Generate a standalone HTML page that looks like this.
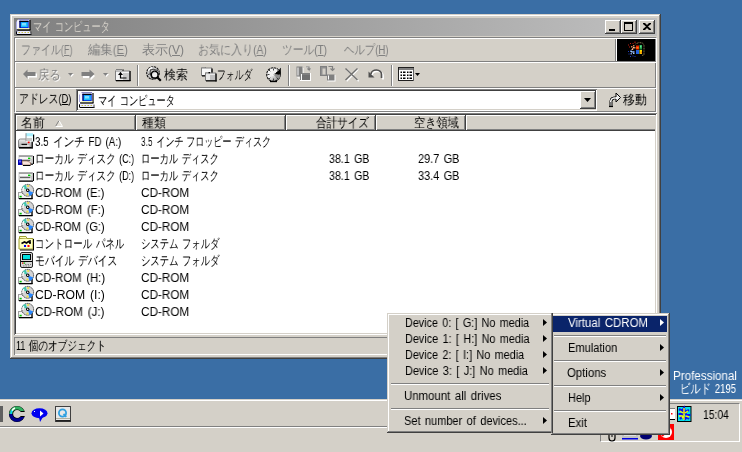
<!DOCTYPE html>
<html><head><meta charset="utf-8">
<style>
*{margin:0;padding:0;box-sizing:border-box}
html,body{width:742px;height:452px;overflow:hidden;background:#3a6ea5;font-family:"Liberation Sans",sans-serif;font-size:12px;color:#000}
.a{position:absolute}
.t{will-change:transform;position:absolute;white-space:nowrap;line-height:14px;font-size:12px;transform-origin:0 0;word-spacing:1.5px}
.j{font-size:12.5px;line-height:0}
.btn{position:absolute;background:#d4d0c8;box-shadow:inset -1px -1px #404040,inset 1px 1px #fff,inset -2px -2px #808080,inset 2px 2px #d4d0c8}
.hdr{position:absolute;top:115px;height:16px;background:#d4d0c8;box-shadow:inset -1px -1px #404040,inset 1px 1px #fff,inset -2px -2px #808080}
.sep{position:absolute;height:2px;border-top:1px solid #808080;border-bottom:1px solid #fff}
.vsep{position:absolute;width:2px;border-left:1px solid #808080;border-right:1px solid #fff}
.pop{position:absolute;background:#d4d0c8;box-shadow:inset -1px -1px #404040,inset 1px 1px #d4d0c8,inset -2px -2px #808080,inset 2px 2px #fff}
svg{position:absolute;overflow:visible}
</style></head><body>
<!-- window frame -->
<div class="a" style="left:10px;top:14px;width:651px;height:345px;background:#d4d0c8;box-shadow:inset -1px -1px #404040,inset 1px 1px #d4d0c8,inset -2px -2px #808080,inset 2px 2px #fff"></div>
<div class="a" style="left:14px;top:18px;width:643px;height:18px;background:linear-gradient(to right,#808080,#c0c0c0)"></div>
<div class="btn" style="left:605px;top:20px;width:16px;height:14px"></div>
<div class="a" style="left:609px;top:29px;width:6px;height:2px;background:#000"></div>
<div class="btn" style="left:621px;top:20px;width:16px;height:14px"></div>
<div class="a" style="left:624px;top:22px;width:9px;height:9px;border:1px solid #000;border-top-width:2px"></div>
<div class="btn" style="left:639px;top:20px;width:16px;height:14px"></div>
<svg style="left:643px;top:23px" width="8" height="7"><path d="M0 0h2l2 2l2-2h2v1l-3 2.5l3 2.5v1h-2l-2-2l-2 2h-2v-1l3-2.5l-3-2.5z" fill="#000"/></svg>

<!-- rebar -->
<div class="a" style="left:14px;top:37px;width:643px;height:76px;border-top:1px solid #808080;border-left:1px solid #808080;border-right:1px solid #fff;border-bottom:1px solid #fff;box-shadow:inset 1px 1px #fff,inset -1px -1px #808080"></div>
<div class="sep" style="left:15px;top:61px;width:641px"></div>
<div class="sep" style="left:15px;top:87px;width:641px"></div>
<div class="vsep" style="left:615px;top:39px;height:22px"></div>
<div class="a" style="left:617px;top:39px;width:38px;height:22px;background:#000"></div>
<div class="vsep" style="left:137px;top:65px;height:21px"></div>
<div class="vsep" style="left:288px;top:65px;height:21px"></div>
<div class="vsep" style="left:391px;top:65px;height:21px"></div>

<!-- address combo -->
<div class="a" style="left:76px;top:89px;width:521px;height:22px;background:#fff;box-shadow:inset 1px 1px #808080,inset -1px -1px #fff,inset 2px 2px #404040,inset -2px -2px #d4d0c8"></div>
<div class="btn" style="left:580px;top:91px;width:16px;height:18px"></div>
<svg style="left:584px;top:98px" width="7" height="4"><path d="M0 0h7L3.5 4z" fill="#000"/></svg>

<!-- list view -->
<div class="a" style="left:14px;top:113px;width:643px;height:222px;background:#fff;box-shadow:inset 1px 1px #808080,inset -1px -1px #fff,inset 2px 2px #404040,inset -2px -2px #d4d0c8"></div>
<div class="hdr" style="left:16px;width:120px"></div>
<div class="hdr" style="left:136px;width:150px"></div>
<div class="hdr" style="left:286px;width:90px"></div>
<div class="hdr" style="left:376px;width:90px"></div>
<div class="hdr" style="left:466px;width:189px;box-shadow:inset 0 -1px #404040,inset 1px 1px #fff,inset 0 -2px #808080"></div>
<svg style="left:55px;top:120px" width="8" height="7"><path d="M0.5 6.5L4 0.5L7.5 6.5z" fill="#e4e0d8"/><path d="M0.5 6.5L4 0.5" stroke="#808080" stroke-width="1"/><path d="M4 0.5L7.5 6.5H0.5" fill="none" stroke="#fff" stroke-width="1"/></svg>

<!-- status bar -->
<div class="a" style="left:14px;top:337px;width:643px;height:18px;box-shadow:inset 1px 1px #808080,inset -1px -1px #fff"></div>

<!-- taskbar -->
<div class="a" style="left:0;top:399px;width:742px;height:53px;background:#d4d0c8;border-top:1px solid #d4d0c8;box-shadow:inset 0 1px #fff"></div>
<div class="sep" style="left:0;top:426px;width:600px"></div>
<div class="a" style="left:600px;top:403px;width:140px;height:39px;border-top:1px solid #808080;border-left:1px solid #808080;border-right:1px solid #fff;border-bottom:1px solid #fff;background:#d4d0c8"></div>
<svg style="left:16px;top:19px;" width="16" height="16" viewBox="0 0 16 16">
<path d="M1 2Q1 0.5 2.5 0.5H13.5V10.5H1z" fill="#f4f4ff"/>
<path d="M0.5 2.5v7.5" stroke="#a8a8e0"/>
<path d="M2.5 0.5H13" stroke="#8888c0"/>
<path d="M14 1v10" stroke="#000" stroke-width="1.2"/>
<rect x="3.5" y="1.8" width="9.2" height="7.4" fill="#0020e0"/>
<rect x="3.5" y="1.8" width="9" height="1.2" fill="#000"/>
<rect x="3.5" y="1.8" width="1" height="7" fill="#000040"/>
<rect x="4.8" y="3.2" width="7" height="5" fill="#18c0ff"/>
<rect x="6" y="4" width="4" height="2.5" fill="#80e0ff"/>
<path d="M2 9.8h11.5" stroke="#ffffa0" stroke-width="1"/>
<path d="M1 11h13.5" stroke="#000" stroke-width="1.3"/>
<path d="M1.5 12L13.5 12L15.5 15.5L0.5 15.5z" fill="#e8e8ff"/>
<path d="M0.5 12v3.5M1 15.5h14.5" stroke="#000" stroke-width="1"/>
<path d="M15 12.5v3" stroke="#404040" stroke-width="1"/>
<path d="M2.5 13.5h1.5M5.5 13.5h1.5M8.5 13.5h1.5M11.5 13.5h1.5" stroke="#c8c040"/>
<path d="M0.5 12.5l1-1" stroke="#8080c0"/>
</svg>
<svg style="left:79px;top:92px;" width="16" height="16" viewBox="0 0 16 16">
<path d="M1 2Q1 0.5 2.5 0.5H13.5V10.5H1z" fill="#f4f4ff"/>
<path d="M0.5 2.5v7.5" stroke="#a8a8e0"/>
<path d="M2.5 0.5H13" stroke="#8888c0"/>
<path d="M14 1v10" stroke="#000" stroke-width="1.2"/>
<rect x="3.5" y="1.8" width="9.2" height="7.4" fill="#0020e0"/>
<rect x="3.5" y="1.8" width="9" height="1.2" fill="#000"/>
<rect x="3.5" y="1.8" width="1" height="7" fill="#000040"/>
<rect x="4.8" y="3.2" width="7" height="5" fill="#18c0ff"/>
<rect x="6" y="4" width="4" height="2.5" fill="#80e0ff"/>
<path d="M2 9.8h11.5" stroke="#ffffa0" stroke-width="1"/>
<path d="M1 11h13.5" stroke="#000" stroke-width="1.3"/>
<path d="M1.5 12L13.5 12L15.5 15.5L0.5 15.5z" fill="#e8e8ff"/>
<path d="M0.5 12v3.5M1 15.5h14.5" stroke="#000" stroke-width="1"/>
<path d="M15 12.5v3" stroke="#404040" stroke-width="1"/>
<path d="M2.5 13.5h1.5M5.5 13.5h1.5M8.5 13.5h1.5M11.5 13.5h1.5" stroke="#c8c040"/>
<path d="M0.5 12.5l1-1" stroke="#8080c0"/>
</svg>
<svg style="left:627px;top:41px;" width="20" height="17" viewBox="0 0 20 17">
<g fill="#d08050"><rect x="4" y="5" width="1.5" height="1.5"/><rect x="6" y="4" width="1.5" height="1.5"/><rect x="5" y="7" width="1.5" height="1.5"/><rect x="7" y="6" width="1.5" height="1.5"/></g>
<g fill="#f0b8a0"><rect x="6" y="6" width="1.2" height="1.2"/><rect x="4.5" y="8" width="1.5" height="1"/></g>
<g fill="#7088d0"><rect x="3" y="9.5" width="2" height="1.5"/><rect x="5.5" y="10" width="2" height="2"/><rect x="3.5" y="12" width="1.5" height="1.5"/></g>
<g fill="#a0d0f0"><rect x="4" y="10" width="1.5" height="1.5"/><rect x="6" y="12" width="1.5" height="1"/></g>
<rect x="9" y="4.5" width="3" height="4" fill="#f02000"/>
<rect x="9.5" y="6" width="2" height="1.5" fill="#ff8000"/>
<rect x="12.5" y="4" width="2.5" height="4.5" fill="#20a040"/>
<rect x="13" y="4.5" width="1.5" height="2" fill="#60e0a0"/>
<rect x="9" y="9" width="3" height="4" fill="#2060e0"/>
<rect x="12.5" y="9" width="2.5" height="4" fill="#f0e000"/>
<rect x="13.5" y="10.5" width="1.5" height="2" fill="#ff8000"/>
<path d="M8.5 3l3.5-1.5l3.5 0.5l1.5 2v10l-2.5 0.5" fill="none" stroke="#908050" stroke-width="0.9" stroke-dasharray="1 0.6"/>
<g fill="#c02010"><rect x="1" y="3.5" width="1" height="1"/><rect x="3" y="2" width="1" height="1"/><rect x="5.5" y="2" width="1" height="1"/><rect x="7.5" y="0.5" width="1" height="1.5"/><rect x="2" y="5.5" width="1" height="1"/></g>
<g fill="#2040c0"><rect x="1" y="10" width="1" height="1"/><rect x="1.5" y="12.5" width="1" height="1"/><rect x="3" y="15" width="1" height="1"/><rect x="5.5" y="14.5" width="1" height="1"/><rect x="7.5" y="15" width="1" height="1"/></g>
</svg>
<svg style="left:22px;top:69px;" width="16" height="12" viewBox="0 0 16 12">
<path d="M6 1.5L2 5.5L6 9.5V7.5H14V3.5H6z" fill="#fff" transform="translate(1,1)"/>
<path d="M5.5 0.5L1 5L5.5 9.5V7H13.5V3H5.5z" fill="#808080"/>
</svg>
<svg style="left:68px;top:73px;" width="6" height="4" viewBox="0 0 6 4"><path d="M1 1h5l-2.5 3z" fill="#fff"/><path d="M0 0h5l-2.5 3z" fill="#808080"/></svg>
<svg style="left:81px;top:69px;" width="16" height="12" viewBox="0 0 16 12">
<path d="M8.5 1.5L13 6L8.5 10.5V8H1V4H8.5z" fill="#fff" transform="translate(1,1)"/>
<path d="M8.5 0.5L13.5 5L8.5 9.5V7H0.5V3H8.5z" fill="#808080"/>
</svg>
<svg style="left:103px;top:73px;" width="6" height="4" viewBox="0 0 6 4"><path d="M1 1h5l-2.5 3z" fill="#fff"/><path d="M0 0h5l-2.5 3z" fill="#808080"/></svg>
<svg style="left:115px;top:68px;" width="16" height="14" viewBox="0 0 16 14">
<path d="M1 1.5h6l1 1.5" fill="none" stroke="#808080" stroke-width="1"/>
<rect x="1" y="2" width="6" height="1" fill="#fff"/>
<rect x="7.5" y="1.5" width="1.2" height="1.5" fill="#000"/>
<rect x="0.5" y="3" width="14" height="9.5" fill="#f4f4f4" stroke="#808080" stroke-width="1"/>
<rect x="8" y="5" width="6" height="7" fill="#c8c8c8"/>
<rect x="1" y="12" width="14.5" height="1.3" fill="#000"/>
<rect x="14.5" y="3" width="1.2" height="10" fill="#000"/>
<path d="M5.5 4.5v5.5h6" fill="none" stroke="#000" stroke-width="1.2"/>
<path d="M3 7l2.5-3l2.5 3z" fill="#000"/>
</svg>
<svg style="left:146px;top:66px;" width="16" height="16" viewBox="0 0 16 16">
<circle cx="7" cy="7" r="6.3" fill="#c8c8c8" stroke="#101010" stroke-width="1.1" stroke-dasharray="2.2 0.8"/>
<path d="M2.5 4.5Q7 2 12 4.5M2 8.5Q5 7 8 8M4.5 1.5Q3 7 6 12.5" stroke="#303030" stroke-width="0.9" fill="none"/>
<path d="M2.5 5a5 5 0 0 1 4-3.5" stroke="#fff" stroke-width="1.4" fill="none"/>
<circle cx="8.7" cy="8.7" r="3.4" fill="#f0f0f0" stroke="#000" stroke-width="1.5"/>
<path d="M7 7.5a2 2 0 0 1 2-1.5" stroke="#b0b0b0" stroke-width="0.9" fill="none"/>
<path d="M11.2 11.2l3.6 3.6" stroke="#000" stroke-width="2.2"/>
</svg>
<svg style="left:201px;top:66px;" width="16" height="16" viewBox="0 0 16 16">
<path d="M0.5 2h3.5l1-1" fill="none" stroke="#808080"/>
<rect x="0.5" y="2" width="10" height="7.5" fill="#f8f8f8" stroke="#808080" stroke-width="1"/>
<rect x="1" y="9.3" width="10.5" height="1.2" fill="#000"/>
<rect x="10.5" y="2.5" width="1.2" height="8" fill="#000"/>
<path d="M4.5 7h4l1-1" fill="none" stroke="#808080"/>
<rect x="4.5" y="7" width="10" height="7.5" fill="#e8e8e8" stroke="#808080" stroke-width="1"/>
<rect x="9" y="9" width="5" height="5" fill="#c0c0c0"/>
<rect x="5" y="14.3" width="10.5" height="1.2" fill="#000"/>
<rect x="14.5" y="7.5" width="1.2" height="8" fill="#000"/>
<rect x="7.5" y="6" width="1.5" height="1.3" fill="#000"/>
</svg>
<svg style="left:266px;top:67px;" width="16" height="16" viewBox="0 0 16 16">
<defs><linearGradient id="hg" x1="0" y1="0" x2="1" y2="1"><stop offset="0" stop-color="#ffffff"/><stop offset="0.45" stop-color="#f0f0f0"/><stop offset="1" stop-color="#707070"/></linearGradient></defs>
<circle cx="7.5" cy="7.5" r="6.8" fill="url(#hg)" stroke="#101010" stroke-width="1.1" stroke-dasharray="2.5 0.7"/>
<path d="M7.5 7.5L14.8 0.2V7.5z" fill="#000"/>
<path d="M7.5 7.5H14.3A6.8 6.8 0 0 1 12 12.5z" fill="#909090"/>
<path d="M6.5 8.5L14.5 0.5" stroke="#fff" stroke-width="1.3" stroke-dasharray="1 0.8"/>
<path d="M7.5 1.5v2M7.5 11.5v2M1.5 7.5h2M11.5 7.5h2M3 3l1.3 1.3M3 12l1.3-1.3M12 12l-1.3-1.3" stroke="#303030" stroke-width="0.9"/>
<path d="M4 14.5h7" stroke="#000" stroke-width="1.3"/>
</svg>
<svg style="left:296px;top:66px;" width="16" height="16" viewBox="0 0 16 16">
<path d="M1 1h5v10h-5z" fill="none" stroke="#fff" transform="translate(1,1)"/>
<rect x="0.5" y="0.5" width="6" height="10" fill="#808080"/>
<rect x="1.5" y="1.5" width="1" height="8" fill="#fff"/>
<path d="M10 1.5h3v3l1.5-1.5" fill="none" stroke="#fff"/>
<path d="M10 1h3v3l-1.5-1.5M13 4l1.5-1.5" fill="none" stroke="#808080" stroke-width="1.2"/>
<rect x="4" y="7" width="11" height="8" fill="#fff"/>
<rect x="4" y="7" width="10" height="7" fill="#808080"/>
<rect x="5" y="8" width="1" height="6" fill="#fff"/>
<rect x="6" y="9" width="8" height="5" fill="#707070"/>
</svg>
<svg style="left:320px;top:66px;" width="16" height="16" viewBox="0 0 16 16">
<rect x="0" y="0" width="7" height="10" fill="#808080"/>
<rect x="1" y="1" width="5" height="8" fill="#909090"/>
<rect x="2.5" y="2.5" width="3" height="6" fill="#d4d0c8"/>
<path d="M8.5 0.5h4v3" fill="none" stroke="#808080" stroke-width="1.2"/>
<path d="M10.5 2.5l2 2l2-2" fill="none" stroke="#808080" stroke-width="1.2"/>
<rect x="7.5" y="9" width="8" height="6.5" fill="#fff"/>
<rect x="7" y="8.5" width="7.5" height="6" fill="#808080"/>
<rect x="8" y="9.5" width="1" height="4" fill="#fff"/>
</svg>
<svg style="left:345px;top:68px;" width="14" height="13" viewBox="0 0 14 13">
<path d="M1 1L13 12.5M12.5 0.5L1 12.5" stroke="#fff" stroke-width="1.3" transform="translate(0.7,0.7)"/>
<path d="M0.5 0.5L12.5 12M12.5 0.5L0.5 12" stroke="#707070" stroke-width="1.4"/>
</svg>
<svg style="left:368px;top:70px;" width="16" height="10" viewBox="0 0 16 10">
<path d="M3 4.5A5 4 0 0 1 14 5V8.5" fill="none" stroke="#fff" stroke-width="1.8" transform="translate(1,1)"/>
<path d="M3 4A5 4 0 0 1 13.5 4.5V8" fill="none" stroke="#505050" stroke-width="1.6"/>
<path d="M0.5 1.5v6h6z" fill="#505050"/>
</svg>
<svg style="left:398px;top:67px;" width="16" height="14" viewBox="0 0 16 14">
<rect x="0.5" y="0.5" width="15" height="13" fill="#fff" stroke="#202020" stroke-width="1"/>
<rect x="1" y="1" width="14" height="2" fill="#808080"/>
<rect x="15" y="1" width="1" height="13" fill="#606060"/>
<g fill="#000">
<rect x="2.5" y="4.5" width="1.5" height="1.5"/><rect x="5" y="4.5" width="2.5" height="1.5"/>
<rect x="9" y="4.5" width="1.5" height="1.5"/><rect x="11.5" y="4.5" width="2.5" height="1.5"/>
<rect x="2.5" y="7.5" width="1.5" height="1.5"/><rect x="5" y="7.5" width="2.5" height="1.5"/>
<rect x="9" y="7.5" width="1.5" height="1.5"/><rect x="11.5" y="7.5" width="2.5" height="1.5"/>
<rect x="2.5" y="10.5" width="1.5" height="1.5"/><rect x="5" y="10.5" width="2.5" height="1.5"/>
<rect x="9" y="10.5" width="1.5" height="1.5"/><rect x="11.5" y="10.5" width="2.5" height="1.5"/>
</g>
</svg>
<svg style="left:415px;top:73px;" width="6" height="4" viewBox="0 0 6 4"><path d="M0 0h5l-2.5 3z" fill="#000"/></svg>
<svg style="left:606px;top:92px;" width="16" height="16" viewBox="0 0 16 16">
<path d="M4 14.5V9A4 4 0 0 1 8 5h2V1l4.5 4.5L10 10V7H8.5A2.5 2.5 0 0 0 6 9.5v5z" fill="#f0f0f0" stroke="#000" stroke-width="1"/>
<path d="M4.5 10A3.5 3.5 0 0 1 8 6h3" fill="none" stroke="#fff" stroke-width="1"/>
<path d="M3 14.5h4" stroke="#000" stroke-width="1.2"/>
</svg>
<svg style="left:18px;top:133px;" width="16" height="16" viewBox="0 0 16 16">
<defs><linearGradient id="fg" x1="0" y1="0" x2="0" y2="1"><stop offset="0" stop-color="#f0f0f0"/><stop offset="1" stop-color="#a0a0a0"/></linearGradient></defs>
<path d="M0.5 8Q0.5 6 2.5 6H14V14.5H0.5z" fill="url(#fg)" stroke="#707070" stroke-width="0.8"/>
<rect x="1" y="14" width="14" height="1.6" fill="#000"/>
<rect x="13.6" y="6.5" width="1.4" height="8.5" fill="#202020"/>
<rect x="3.5" y="10.8" width="5.5" height="1.5" fill="#101010"/>
<rect x="2.5" y="12.4" width="9" height="1" fill="#fff"/>
<rect x="8" y="0.2" width="7" height="8.5" fill="#f4ffff"/>
<rect x="8" y="0.2" width="7" height="3" fill="#a8f0ff"/>
<rect x="8.5" y="5" width="5.5" height="3" fill="#c8c8c8"/>
<rect x="15" y="1.5" width="1.2" height="7" fill="#000"/>
<rect x="7.5" y="0.2" width="1" height="8" fill="#909090"/>
<rect x="9.8" y="8.6" width="1.8" height="1.6" fill="#ff0000"/>
</svg>
<svg style="left:18px;top:150px;" width="16" height="16" viewBox="0 0 16 16">
<rect x="0.5" y="5" width="14.5" height="8.5" fill="#c8c8c8"/>
<rect x="1" y="5.5" width="13.5" height="1.2" fill="#909090"/>
<rect x="1.5" y="7" width="12" height="2" fill="#f8f8f8"/>
<rect x="2" y="10" width="10" height="1.2" fill="#606060"/>
<rect x="2" y="11.5" width="11" height="1.2" fill="#ffffff"/>
<rect x="15" y="6" width="1" height="8" fill="#000"/>
<rect x="1" y="13.5" width="14" height="1.3" fill="#000"/>
<rect x="10" y="7.6" width="2.4" height="1.4" fill="#00d000"/>

<rect x="0" y="9.5" width="4" height="5.5" fill="#0000b0"/>
<rect x="1" y="10.5" width="2" height="2" fill="#6060ff"/>
<path d="M4 11h5l3.5 1.5v2.5h-8z" fill="#f8e4dc" stroke="#805040" stroke-width="0.6"/>
<path d="M5 15.5h7.5" stroke="#000"/>
</svg>
<svg style="left:18px;top:167px;" width="16" height="16" viewBox="0 0 16 16">
<rect x="0.5" y="5" width="14.5" height="8.5" fill="#c8c8c8"/>
<rect x="1" y="5.5" width="13.5" height="1.2" fill="#909090"/>
<rect x="1.5" y="7" width="12" height="2" fill="#f8f8f8"/>
<rect x="2" y="10" width="10" height="1.2" fill="#606060"/>
<rect x="2" y="11.5" width="11" height="1.2" fill="#ffffff"/>
<rect x="15" y="6" width="1" height="8" fill="#000"/>
<rect x="1" y="13.5" width="14" height="1.3" fill="#000"/>
<rect x="10" y="7.6" width="2.4" height="1.4" fill="#00d000"/>
</svg>
<svg style="left:18px;top:184px;" width="16" height="16" viewBox="0 0 16 16">
<rect x="0.5" y="8.5" width="13" height="6" fill="#f4f4f4" stroke="#a0a0a0" stroke-width="1"/>
<rect x="1" y="14" width="13.5" height="1.3" fill="#000"/>
<rect x="13.5" y="9" width="1.2" height="6" fill="#000"/>
<circle cx="9.7" cy="6.3" r="5.9" fill="#d4d4d4" stroke="#202020" stroke-width="0.9" stroke-dasharray="1.3 0.7"/>
<path d="M9.7 6.3L4.2 3.5A6 6 0 0 1 7.5 0.7z" fill="#40c8b0"/>
<path d="M9.7 6.3L11.5 12A6 6 0 0 0 15.2 8.5z" fill="#2888ff"/>
<path d="M5 7A5 5 0 0 1 6 3" stroke="#fff" stroke-width="1.2" fill="none"/>
<circle cx="10.2" cy="2" r="1.1" fill="#e8e040"/>
<circle cx="9.4" cy="10.6" r="1.1" fill="#e8e040"/>
<circle cx="9.7" cy="6.3" r="1.7" fill="#000"/>
<circle cx="9.7" cy="6.3" r="0.8" fill="#fff"/>
<rect x="1.5" y="11.8" width="2.2" height="1.6" fill="#00c000"/>
</svg>
<svg style="left:18px;top:201px;" width="16" height="16" viewBox="0 0 16 16">
<rect x="0.5" y="8.5" width="13" height="6" fill="#f4f4f4" stroke="#a0a0a0" stroke-width="1"/>
<rect x="1" y="14" width="13.5" height="1.3" fill="#000"/>
<rect x="13.5" y="9" width="1.2" height="6" fill="#000"/>
<circle cx="9.7" cy="6.3" r="5.9" fill="#d4d4d4" stroke="#202020" stroke-width="0.9" stroke-dasharray="1.3 0.7"/>
<path d="M9.7 6.3L4.2 3.5A6 6 0 0 1 7.5 0.7z" fill="#40c8b0"/>
<path d="M9.7 6.3L11.5 12A6 6 0 0 0 15.2 8.5z" fill="#2888ff"/>
<path d="M5 7A5 5 0 0 1 6 3" stroke="#fff" stroke-width="1.2" fill="none"/>
<circle cx="10.2" cy="2" r="1.1" fill="#e8e040"/>
<circle cx="9.4" cy="10.6" r="1.1" fill="#e8e040"/>
<circle cx="9.7" cy="6.3" r="1.7" fill="#000"/>
<circle cx="9.7" cy="6.3" r="0.8" fill="#fff"/>
<rect x="1.5" y="11.8" width="2.2" height="1.6" fill="#00c000"/>
</svg>
<svg style="left:18px;top:218px;" width="16" height="16" viewBox="0 0 16 16">
<rect x="0.5" y="8.5" width="13" height="6" fill="#f4f4f4" stroke="#a0a0a0" stroke-width="1"/>
<rect x="1" y="14" width="13.5" height="1.3" fill="#000"/>
<rect x="13.5" y="9" width="1.2" height="6" fill="#000"/>
<circle cx="9.7" cy="6.3" r="5.9" fill="#d4d4d4" stroke="#202020" stroke-width="0.9" stroke-dasharray="1.3 0.7"/>
<path d="M9.7 6.3L4.2 3.5A6 6 0 0 1 7.5 0.7z" fill="#40c8b0"/>
<path d="M9.7 6.3L11.5 12A6 6 0 0 0 15.2 8.5z" fill="#2888ff"/>
<path d="M5 7A5 5 0 0 1 6 3" stroke="#fff" stroke-width="1.2" fill="none"/>
<circle cx="10.2" cy="2" r="1.1" fill="#e8e040"/>
<circle cx="9.4" cy="10.6" r="1.1" fill="#e8e040"/>
<circle cx="9.7" cy="6.3" r="1.7" fill="#000"/>
<circle cx="9.7" cy="6.3" r="0.8" fill="#fff"/>
<rect x="1.5" y="11.8" width="2.2" height="1.6" fill="#00c000"/>
</svg>
<svg style="left:18px;top:269px;" width="16" height="16" viewBox="0 0 16 16">
<rect x="0.5" y="8.5" width="13" height="6" fill="#f4f4f4" stroke="#a0a0a0" stroke-width="1"/>
<rect x="1" y="14" width="13.5" height="1.3" fill="#000"/>
<rect x="13.5" y="9" width="1.2" height="6" fill="#000"/>
<circle cx="9.7" cy="6.3" r="5.9" fill="#d4d4d4" stroke="#202020" stroke-width="0.9" stroke-dasharray="1.3 0.7"/>
<path d="M9.7 6.3L4.2 3.5A6 6 0 0 1 7.5 0.7z" fill="#40c8b0"/>
<path d="M9.7 6.3L11.5 12A6 6 0 0 0 15.2 8.5z" fill="#2888ff"/>
<path d="M5 7A5 5 0 0 1 6 3" stroke="#fff" stroke-width="1.2" fill="none"/>
<circle cx="10.2" cy="2" r="1.1" fill="#e8e040"/>
<circle cx="9.4" cy="10.6" r="1.1" fill="#e8e040"/>
<circle cx="9.7" cy="6.3" r="1.7" fill="#000"/>
<circle cx="9.7" cy="6.3" r="0.8" fill="#fff"/>
<rect x="1.5" y="11.8" width="2.2" height="1.6" fill="#00c000"/>
</svg>
<svg style="left:18px;top:286px;" width="16" height="16" viewBox="0 0 16 16">
<rect x="0.5" y="8.5" width="13" height="6" fill="#f4f4f4" stroke="#a0a0a0" stroke-width="1"/>
<rect x="1" y="14" width="13.5" height="1.3" fill="#000"/>
<rect x="13.5" y="9" width="1.2" height="6" fill="#000"/>
<circle cx="9.7" cy="6.3" r="5.9" fill="#d4d4d4" stroke="#202020" stroke-width="0.9" stroke-dasharray="1.3 0.7"/>
<path d="M9.7 6.3L4.2 3.5A6 6 0 0 1 7.5 0.7z" fill="#40c8b0"/>
<path d="M9.7 6.3L11.5 12A6 6 0 0 0 15.2 8.5z" fill="#2888ff"/>
<path d="M5 7A5 5 0 0 1 6 3" stroke="#fff" stroke-width="1.2" fill="none"/>
<circle cx="10.2" cy="2" r="1.1" fill="#e8e040"/>
<circle cx="9.4" cy="10.6" r="1.1" fill="#e8e040"/>
<circle cx="9.7" cy="6.3" r="1.7" fill="#000"/>
<circle cx="9.7" cy="6.3" r="0.8" fill="#fff"/>
<rect x="1.5" y="11.8" width="2.2" height="1.6" fill="#00c000"/>
</svg>
<svg style="left:18px;top:303px;" width="16" height="16" viewBox="0 0 16 16">
<rect x="0.5" y="8.5" width="13" height="6" fill="#f4f4f4" stroke="#a0a0a0" stroke-width="1"/>
<rect x="1" y="14" width="13.5" height="1.3" fill="#000"/>
<rect x="13.5" y="9" width="1.2" height="6" fill="#000"/>
<circle cx="9.7" cy="6.3" r="5.9" fill="#d4d4d4" stroke="#202020" stroke-width="0.9" stroke-dasharray="1.3 0.7"/>
<path d="M9.7 6.3L4.2 3.5A6 6 0 0 1 7.5 0.7z" fill="#40c8b0"/>
<path d="M9.7 6.3L11.5 12A6 6 0 0 0 15.2 8.5z" fill="#2888ff"/>
<path d="M5 7A5 5 0 0 1 6 3" stroke="#fff" stroke-width="1.2" fill="none"/>
<circle cx="10.2" cy="2" r="1.1" fill="#e8e040"/>
<circle cx="9.4" cy="10.6" r="1.1" fill="#e8e040"/>
<circle cx="9.7" cy="6.3" r="1.7" fill="#000"/>
<circle cx="9.7" cy="6.3" r="0.8" fill="#fff"/>
<rect x="1.5" y="11.8" width="2.2" height="1.6" fill="#00c000"/>
</svg>
<svg style="left:18px;top:235px;" width="16" height="16" viewBox="0 0 16 16">
<path d="M1 3.5h14v10.5h-14z" fill="#ffffc0" stroke="#a0a030" stroke-width="1"/>
<path d="M1.5 3V1.5h6.5l1 2" fill="#ffffc0" stroke="#a0a030" stroke-width="1"/>
<rect x="15" y="4" width="1" height="11" fill="#000"/>
<rect x="2" y="14.5" width="14" height="1" fill="#000"/>
<path d="M3.5 8.5l3-1.5l2 1l2-1.5l2 1.5" stroke="#000" stroke-width="1.6" fill="none"/>
<path d="M12 5v4" stroke="#000" stroke-width="1.5"/>
<rect x="6" y="10" width="2" height="2" fill="#0000ff"/>
<rect x="9.5" y="10" width="2" height="2" fill="#ff0000"/>
</svg>
<svg style="left:18px;top:252px;" width="16" height="16" viewBox="0 0 16 16">
<rect x="2.5" y="0.5" width="12" height="15" rx="1.5" fill="#d8d8d8" stroke="#202020" stroke-width="1"/>
<rect x="4" y="2" width="9" height="6" fill="#000"/>
<rect x="5" y="3" width="7" height="4.2" fill="#00e0e0"/>
<rect x="3" y="9" width="11" height="1" fill="#000"/>
<rect x="4" y="10.5" width="1.5" height="1.2" fill="#ff0000"/>
<rect x="5.6" y="10.5" width="1.5" height="1.2" fill="#00c000"/>
<path d="M7 12.5h1.5M9.5 12.5h1.5M12 12.5h1" stroke="#808080"/>
<path d="M5 14h1.5M7.5 14h1.5M10 14h1.5" stroke="#808080"/>
</svg>
<div class="a" style="left:0;top:406px;width:3px;height:16px;background:#606060"></div>
<svg style="left:9px;top:406px;" width="16" height="16" viewBox="0 0 16 16">
<circle cx="8" cy="8" r="6" fill="none" stroke="#000" stroke-width="4.2"/>
<path d="M8 8m-6.2 0a6.2 6.2 0 0 1 12.4 0" fill="none" stroke="#30b060" stroke-width="3.2"/>
<path d="M8 8m-6.2 0a6.2 6.2 0 0 0 12.4 0" fill="none" stroke="#000090" stroke-width="3.2"/>
<path d="M3 5a5 5 0 0 1 3-3" stroke="#fff" stroke-width="1.5" fill="none"/>
<path d="M2 8a6 6 0 0 1 1-3.5" stroke="#00d0ff" stroke-width="1.5" fill="none"/>
<rect x="11" y="5.5" width="6" height="5" fill="#d4d0c8"/>
<path d="M11.5 5.5h4M11.5 10.5h4" stroke="#000" stroke-width="1"/>
</svg>
<svg style="left:31px;top:408px;" width="18" height="15" viewBox="0 0 18 15">
<ellipse cx="8.5" cy="5.3" rx="8" ry="5" fill="#0000f0"/>
<path d="M8 9l1 5l3-5z" fill="#0000f0"/>
<path d="M9 2.5v6l3.5-3z" fill="#fff"/>
<path d="M3 4l1-1" stroke="#fff" stroke-width="1"/>
</svg>
<svg style="left:55px;top:406px;" width="16" height="16" viewBox="0 0 16 16">
<rect x="0.5" y="0.5" width="15" height="15" fill="#e8e8e8" stroke="#404040" stroke-width="1"/>
<rect x="1" y="14" width="14.5" height="1.5" fill="#202020"/>
<rect x="1" y="12" width="14" height="1" fill="#b0b0a0"/>
<circle cx="7.5" cy="7" r="3.6" fill="none" stroke="#30a0e0" stroke-width="1.8"/>
<path d="M8.5 8l2.8 2.8" stroke="#30a0e0" stroke-width="1.8"/>
</svg>
<svg style="left:677px;top:406px;" width="15" height="16" viewBox="0 0 15 16">
<rect x="0.5" y="0.5" width="13.5" height="15" fill="#00e0e8" stroke="#000" stroke-width="1"/>
<path d="M2 3l3 2l2-3l1 4l4-2M1.5 8h4l2-2l2 3h4M3 13l3-3l2 3l2-2l2 2" stroke="#1010f0" stroke-width="2.2" fill="none"/>
<path d="M7 2v12M3 5l3 2M11 5l-3 2M2 10h4M9 10l3 1M5 12l2-2" stroke="#f8f800" stroke-width="1.4" fill="none"/>
</svg>
<svg style="left:600px;top:424px;" width="75" height="17" viewBox="0 0 75 17">
<path d="M9 11v3a3 3 0 0 0 6 0v-3" fill="none" stroke="#000" stroke-width="1.2"/>
<path d="M12 10v3" stroke="#000" stroke-width="1"/>
<rect x="22" y="9" width="16" height="5" fill="#c0c0c0"/>
<rect x="24" y="10" width="12" height="2" fill="#e0e0e0"/>
<rect x="25" y="10" width="2" height="1" fill="#f00000"/><rect x="31" y="10" width="2" height="1" fill="#00c000"/>
<rect x="22" y="14" width="16" height="1.5" fill="#0000e0"/>
<ellipse cx="46" cy="12" rx="6" ry="3.5" fill="#000070"/>
<rect x="58" y="0" width="16" height="16" fill="#ff0000"/>
<circle cx="66" cy="8" r="6" fill="#fff"/>
<path d="M62 12l8-8" stroke="#ff0000" stroke-width="2"/>
</svg>
<svg style="left:670px;top:408px;" width="5" height="12" viewBox="0 0 5 12">
<rect x="0" y="0" width="5" height="1" fill="#808080"/>
<rect x="0" y="1" width="5" height="10" fill="#fff"/>
<rect x="1" y="5" width="1.5" height="1.5" fill="#f00"/>
<rect x="0" y="11" width="5" height="1" fill="#000"/>
</svg>
<div class="t" style="left:33.30px;top:20px;transform:scaleX(0.7048);color:#d4d0c8;"><span class="j">マイ</span> <span class="j">コンピュータ</span></div>
<div class="t" style="left:21.47px;top:43px;transform:scaleX(0.7656);color:#808080;"><span class="j">ファイル</span>(<u>F</u>)</div>
<div class="t" style="left:88.00px;top:43px;transform:scaleX(0.9512);color:#808080;"><span class="j">編集</span>(<u>E</u>)</div>
<div class="t" style="left:142.00px;top:43px;transform:scaleX(1.0000);color:#808080;"><span class="j">表示</span>(<u>V</u>)</div>
<div class="t" style="left:198.15px;top:43px;transform:scaleX(0.8481);color:#808080;"><span class="j">お気に入り</span>(<u>A</u>)</div>
<div class="t" style="left:282.17px;top:43px;transform:scaleX(0.8269);color:#808080;"><span class="j">ツール</span>(<u>T</u>)</div>
<div class="t" style="left:344.00px;top:43px;transform:scaleX(0.8000);color:#808080;"><span class="j">ヘルプ</span>(<u>H</u>)</div>
<div class="t" style="left:38.13px;top:68px;transform:scaleX(0.8696);color:#808080;text-shadow:1px 1px #fff;"><span class="j">戻る</span></div>
<div class="t" style="left:164.00px;top:68px;transform:scaleX(0.9200);"><span class="j">検索</span></div>
<div class="t" style="left:216.64px;top:68px;transform:scaleX(0.6800);"><span class="j">フォルダ</span></div>
<div class="t" style="left:19.24px;top:92px;transform:scaleX(0.7612);"><span class="j">アドレス</span>(<u>D</u>)</div>
<div class="t" style="left:98.30px;top:94px;transform:scaleX(0.7048);"><span class="j">マイ</span> <span class="j">コンピュータ</span></div>
<div class="t" style="left:623.00px;top:93px;transform:scaleX(0.9200);"><span class="j">移動</span></div>
<div class="t" style="left:21.08px;top:116px;transform:scaleX(0.9167);"><span class="j">名前</span></div>
<div class="t" style="left:142.00px;top:116px;transform:scaleX(0.9200);"><span class="j">種類</span></div>
<div class="t" style="left:316.19px;top:116px;transform:scaleX(0.8125);"><span class="j">合計サイズ</span></div>
<div class="t" style="left:414.14px;top:116px;transform:scaleX(0.8627);"><span class="j">空き領域</span></div>
<div class="t" style="left:35.18px;top:135px;transform:scaleX(0.8173);">3.5 <span class="j">インチ</span> FD (A:)</div>
<div class="t" style="left:141.30px;top:135px;transform:scaleX(0.6957);">3.5 <span class="j">インチ</span> <span class="j">フロッピー</span> <span class="j">ディスク</span></div>
<div class="t" style="left:34.52px;top:152px;transform:scaleX(0.7405);"><span class="j">ローカル</span> <span class="j">ディスク</span> (C:)</div>
<div class="t" style="left:140.57px;top:152px;transform:scaleX(0.7143);"><span class="j">ローカル</span> <span class="j">ディスク</span></div>
<div class="t" style="left:329.11px;top:152px;transform:scaleX(0.8864);">38.1 GB</div>
<div class="t" style="left:418.09px;top:152px;transform:scaleX(0.9091);">29.7 GB</div>
<div class="t" style="left:34.52px;top:169px;transform:scaleX(0.7405);"><span class="j">ローカル</span> <span class="j">ディスク</span> (D:)</div>
<div class="t" style="left:140.57px;top:169px;transform:scaleX(0.7143);"><span class="j">ローカル</span> <span class="j">ディスク</span></div>
<div class="t" style="left:329.11px;top:169px;transform:scaleX(0.8864);">38.1 GB</div>
<div class="t" style="left:418.09px;top:169px;transform:scaleX(0.9091);">33.4 GB</div>
<div class="t" style="left:35.06px;top:186px;transform:scaleX(0.9444);">CD-ROM (E:)</div>
<div class="t" style="left:141.02px;top:186px;transform:scaleX(0.9787);">CD-ROM</div>
<div class="t" style="left:35.04px;top:203px;transform:scaleX(0.9577);">CD-ROM (F:)</div>
<div class="t" style="left:141.02px;top:203px;transform:scaleX(0.9787);">CD-ROM</div>
<div class="t" style="left:35.07px;top:220px;transform:scaleX(0.9315);">CD-ROM (G:)</div>
<div class="t" style="left:141.02px;top:220px;transform:scaleX(0.9787);">CD-ROM</div>
<div class="t" style="left:34.53px;top:237px;transform:scaleX(0.7333);"><span class="j">コントロール</span> <span class="j">パネル</span></div>
<div class="t" style="left:140.56px;top:237px;transform:scaleX(0.7196);"><span class="j">システム</span> <span class="j">フォルダ</span></div>
<div class="t" style="left:35.25px;top:254px;transform:scaleX(0.7547);"><span class="j">モバイル</span> <span class="j">デバイス</span></div>
<div class="t" style="left:140.56px;top:254px;transform:scaleX(0.7196);"><span class="j">システム</span> <span class="j">フォルダ</span></div>
<div class="t" style="left:35.06px;top:271px;transform:scaleX(0.9444);">CD-ROM (H:)</div>
<div class="t" style="left:141.02px;top:271px;transform:scaleX(0.9787);">CD-ROM</div>
<div class="t" style="left:34.99px;top:288px;transform:scaleX(1.0149);">CD-ROM (I:)</div>
<div class="t" style="left:141.02px;top:288px;transform:scaleX(0.9787);">CD-ROM</div>
<div class="t" style="left:35.03px;top:305px;transform:scaleX(0.9714);">CD-ROM (J:)</div>
<div class="t" style="left:141.02px;top:305px;transform:scaleX(0.9787);">CD-ROM</div>
<div class="t" style="left:16.26px;top:339px;transform:scaleX(0.7436);">11 <span class="j">個のオブジェクト</span></div>
<div class="t" style="left:673.03px;top:369px;transform:scaleX(0.9688);color:#fff;">Professional</div>
<div class="t" style="left:680.41px;top:382px;transform:scaleX(0.7941);color:#fff;"><span class="j">ビルド</span> 2195</div>
<div class="t" style="left:703.14px;top:408px;transform:scaleX(0.8621);">15:04</div>
<div class="t" style="left:405.10px;top:316px;transform:scaleX(0.8978);z-index:6;">Device 0: [ G:] No media</div>
<div class="t" style="left:405.10px;top:332px;transform:scaleX(0.9044);z-index:6;">Device 1: [ H:] No media</div>
<div class="t" style="left:405.10px;top:348px;transform:scaleX(0.9008);z-index:6;">Device 2: [ I:] No media</div>
<div class="t" style="left:405.09px;top:364px;transform:scaleX(0.9104);z-index:6;">Device 3: [ J:] No media</div>
<div class="t" style="left:404.05px;top:389px;transform:scaleX(0.9505);z-index:6;">Unmount all drives</div>
<div class="t" style="left:404.08px;top:414px;transform:scaleX(0.9167);z-index:6;">Set number of devices...</div>
<div class="t" style="left:568.00px;top:316px;transform:scaleX(0.9518);color:#fff;z-index:6;">Virtual CDROM</div>
<div class="t" style="left:568.08px;top:341px;transform:scaleX(0.9231);z-index:6;">Emulation</div>
<div class="t" style="left:567.05px;top:366px;transform:scaleX(0.9500);z-index:6;">Options</div>
<div class="t" style="left:568.09px;top:391px;transform:scaleX(0.9130);z-index:6;">Help</div>
<div class="t" style="left:568.05px;top:416px;transform:scaleX(0.9474);z-index:6;">Exit</div>
<!-- popup menu 1 -->
<div class="pop" style="left:387px;top:313px;width:166px;height:120px;z-index:5"></div>
<div class="sep" style="left:391px;top:383px;width:158px;z-index:5"></div>
<div class="sep" style="left:391px;top:408px;width:158px;z-index:5"></div>
<svg style="left:543px;top:319px;z-index:6" width="4" height="7"><path d="M0 0L4 3.5L0 7z" fill="#000"/></svg>
<svg style="left:543px;top:335px;z-index:6" width="4" height="7"><path d="M0 0L4 3.5L0 7z" fill="#000"/></svg>
<svg style="left:543px;top:351px;z-index:6" width="4" height="7"><path d="M0 0L4 3.5L0 7z" fill="#000"/></svg>
<svg style="left:543px;top:367px;z-index:6" width="4" height="7"><path d="M0 0L4 3.5L0 7z" fill="#000"/></svg>
<svg style="left:543px;top:417px;z-index:6" width="4" height="7"><path d="M0 0L4 3.5L0 7z" fill="#000"/></svg>
<!-- popup menu 2 -->
<div class="pop" style="left:551px;top:313px;width:119px;height:122px;z-index:5"></div>
<div class="a" style="left:551px;top:313px;width:1px;height:120px;background:#808080;z-index:5"></div>
<div class="a" style="left:552px;top:313px;width:1px;height:120px;background:#404040;z-index:5"></div>
<div class="a" style="left:553px;top:316px;width:114px;height:16px;background:#0a246a;z-index:5"></div>
<div class="sep" style="left:554px;top:335px;width:112px;z-index:5"></div>
<div class="sep" style="left:554px;top:360px;width:112px;z-index:5"></div>
<div class="sep" style="left:554px;top:385px;width:112px;z-index:5"></div>
<div class="sep" style="left:554px;top:410px;width:112px;z-index:5"></div>
<svg style="left:660px;top:319px;z-index:6" width="4" height="7"><path d="M0 0L4 3.5L0 7z" fill="#fff"/></svg>
<svg style="left:660px;top:344px;z-index:6" width="4" height="7"><path d="M0 0L4 3.5L0 7z" fill="#000"/></svg>
<svg style="left:660px;top:369px;z-index:6" width="4" height="7"><path d="M0 0L4 3.5L0 7z" fill="#000"/></svg>
<svg style="left:660px;top:394px;z-index:6" width="4" height="7"><path d="M0 0L4 3.5L0 7z" fill="#000"/></svg>

</body></html>
